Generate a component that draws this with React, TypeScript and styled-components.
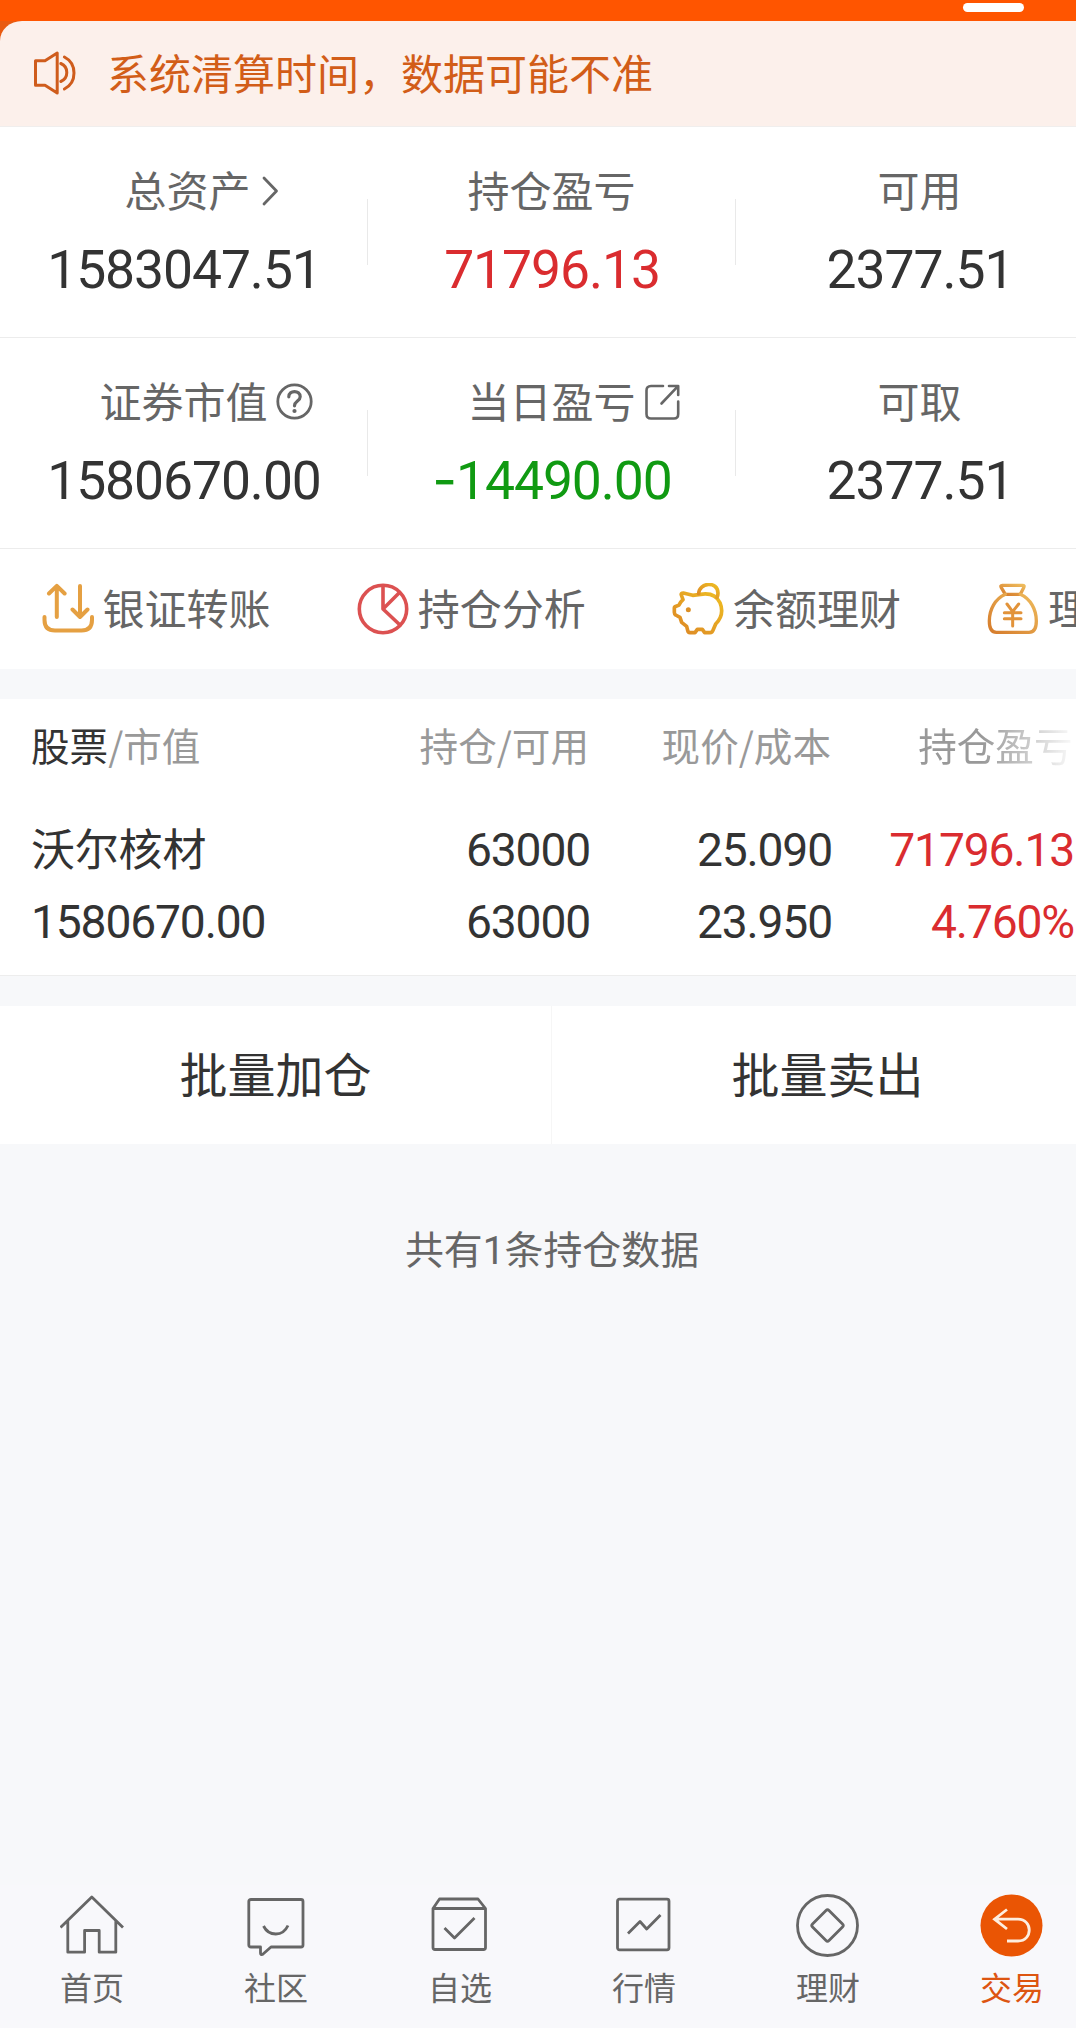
import React from 'react';
import styled, { createGlobalStyle } from 'styled-components';

const CJK = "'Noto Sans CJK SC', 'Noto Sans', sans-serif";
const NUM = "Roboto, 'Noto Sans CJK SC', sans-serif";

const GlobalStyle = createGlobalStyle`
  * { box-sizing: border-box; }
  html { background: #f7f8fa; }
  body { margin: 0; overflow: hidden; font-family: ${CJK}; }
`;

/* The page is wider than the viewport; its right edge is cut off. */
const Viewport = styled.div`
  width: 1076px;
  height: 2028px;
  overflow: hidden;
`;

const Page = styled.div`
  width: 1104px;
  height: 2028px;
  display: flex;
  flex-direction: column;
  background: #f7f8fa;
`;

const TopBar = styled.header`
  height: 21px;
  flex: none;
  padding: 3px 0 0 963px;
  background: #ff5500;
`;

const Pill = styled.div`
  width: 61px;
  height: 9px;
  border-radius: 4.5px;
  background: #fff;
`;

const NoticeWrap = styled.div`
  flex: none;
  background: linear-gradient(#e95a10 0 30px, #fff 30px);
`;

const Notice = styled.div`
  height: 106px;
  display: flex;
  align-items: center;
  padding: 0 0 2px 32px;
  border-radius: 22px 0 0 0 / 20px 0 0 0;
  background: #fcf0eb;
  border-bottom: 1px solid #f0eeed;
`;

const NoticeText = styled.span`
  margin: -2px 0 0 29px;
  font-size: 42px;
  line-height: 60px;
  color: #d25d18;
`;

const Panel = styled.section`
  flex: none;
  background: #fff;
`;

const StatRow = styled.div`
  height: 211px;
  display: grid;
  grid-template-columns: repeat(3, 368px);
  border-bottom: 1px solid #ececec;
`;

const StatCell = styled.div<{ $divided?: boolean }>`
  display: flex;
  flex-direction: column;
  align-items: center;
  padding-top: 41px;
  background: ${(p) =>
    p.$divided ? 'linear-gradient(#e9e9e9, #e9e9e9) 100% 72px / 1px 66px no-repeat' : 'none'};
`;

const StatLabel = styled.div<{ $shift?: number }>`
  display: flex;
  align-items: center;
  height: 42px;
  padding-left: ${(p) => p.$shift ?? 0}px;
  margin-left: -1px;
  font-size: 42px;
  line-height: 42px;
  color: #666;
  white-space: nowrap;

  svg {
    flex: none;
  }
`;

const HangingIcon = styled.span<{ $w: number }>`
  display: flex;
  width: ${(p) => p.$w}px;
  margin-right: -${(p) => p.$w}px;
  justify-content: flex-end;
  padding-top: 3px;
`;

type Tone = 'plain' | 'up' | 'down';
const tones: Record<Tone, string> = { plain: '#333', up: '#da2c2f', down: '#109a12' };

const StatValue = styled.div<{ $tone: Tone }>`
  margin-top: 34px;
  font-family: ${NUM};
  font-size: 53.4px;
  line-height: 52px;
  letter-spacing: -1.05px;
  color: ${(p) => tones[p.$tone]};
`;

const Minus = styled.span`
  font-family: Inter, sans-serif;
  font-size: 54px;
  line-height: 0;
`;

const Actions = styled.div`
  height: 120px;
  display: flex;
  overflow: hidden;
`;

const Action = styled.div`
  flex: none;
  width: 315.2px;
  display: flex;
  align-items: center;
  padding-left: 41.5px;
  font-size: 42px;
  line-height: 48px;
  color: #666;
  white-space: nowrap;

  svg {
    flex: none;
    margin-right: 9px;
  }
`;

const ActionText = styled.span`
  padding-bottom: 4px;
`;

const Gap = styled.div<{ $h: number; $line?: boolean }>`
  flex: none;
  height: ${(p) => p.$h}px;
  border-top: ${(p) => (p.$line ? '1px solid #ededed' : '0')};
`;

const Holdings = styled(Panel)`
  height: 276px;
  padding-left: 31px;
`;

const HoldRow = styled.div`
  display: grid;
  grid-template-columns: 259px 300px 242px 242px;
  text-align: right;
  white-space: nowrap;

  > :first-child {
    text-align: left;
  }
`;

const HoldHead = styled(HoldRow)`
  padding-top: 19px;
  height: 115px;
  font-size: 38.6px;
  line-height: 52px;
  color: #999;
`;

const Strong = styled.span`
  color: #333;
`;

const HeadCell = styled.span<{ $fade?: boolean }>`
  margin-right: ${(p) => (p.$fade ? 1.5 : 1)}px;
  mask-image: ${(p) => (p.$fade ? 'linear-gradient(to right, #000 62%, transparent 102%)' : 'none')};
`;

const HoldLine = styled(HoldRow)`
  height: 72px;
  line-height: 72px;
  font-family: ${NUM};
  font-size: 46.2px;
  letter-spacing: -1.15px;
  color: #333;
`;

const StockName = styled.span`
  margin-top: -3px;
  font-family: ${CJK};
  font-size: 44px;
  letter-spacing: -0.2px;
`;

const Num = styled.span<{ $tone?: Tone }>`
  color: ${(p) => tones[p.$tone ?? 'plain']};
`;

const BatchBar = styled(Panel)`
  height: 138px;
  display: grid;
  grid-template-columns: 1fr 1fr;
`;

const BatchButton = styled.button`
  border: 0;
  border-right: 1px solid #f6f6f6;
  padding: 0 0 6px;
  background: #fff;
  font-family: ${CJK};
  font-size: 48px;
  line-height: 60px;
  color: #333;
`;

const Summary = styled.p`
  flex: 1;
  margin: 0;
  padding-top: 77px;
  font-size: 38.9px;
  line-height: 52px;
  text-align: center;
  color: #666;
`;

const Count = styled.span`
  font-family: ${NUM};
`;

const TabBar = styled.nav`
  flex: none;
  height: 143px;
  display: grid;
  grid-template-columns: repeat(6, 184px);
  background: #f8f8fb;
`;

const Tab = styled.div<{ $active?: boolean }>`
  display: flex;
  flex-direction: column;
  align-items: center;
  padding-top: 8px;
  font-size: 32px;
  line-height: 40px;
  color: ${(p) => (p.$active ? '#dd5511' : '#666')};

  svg {
    margin-bottom: 9px;
  }
`;

const SpeakerIcon = () => (
  <svg width="46" height="46" viewBox="32 50 46 46" fill="none" stroke="#cf5c1c" strokeWidth="3" strokeLinejoin="round" strokeLinecap="round">
    <path d="M35.5 60.7H45L57.2 53V93L45 85.3H35.5Z" />
    <path d="M60.8 63.5Q66.8 66 66.8 72.5T60.8 81.5M64.4 57Q74 62 74 73T64.4 89" />
  </svg>
);

const ChevronIcon = () => (
  <svg width="17" height="30" viewBox="0 0 17 30" fill="none" stroke="#666" strokeWidth="2.8" strokeLinecap="round" strokeLinejoin="round">
    <path d="M2 2L14.5 15L2 28" />
  </svg>
);

const HelpIcon = () => (
  <svg width="37" height="37" viewBox="0 0 37 37" fill="none" stroke="#666" strokeWidth="2.8" strokeLinecap="round">
    <circle cx="18.5" cy="18.5" r="16.7" />
    <path d="M12.8 13.8C12.8 6.8 24.2 6.8 24.2 13.8C24.2 18 18.5 18.2 18.5 22.8" strokeWidth="3.2" />
    <circle cx="18.5" cy="28" r="2.1" fill="#666" stroke="none" />
  </svg>
);

const ShareIcon = () => (
  <svg width="35" height="36" viewBox="0 0 35 36" fill="none" stroke="#666" strokeWidth="2.6" strokeLinecap="round" strokeLinejoin="round">
    <path d="M18 2H6Q1.5 2 1.5 6.5V30Q1.5 34.5 6 34.5H29Q33.2 34.5 33.2 30V17.5" />
    <path d="M24 2H33.2V11M33 2.2L16.5 19.5" />
  </svg>
);

const TransferIcon = () => (
  <svg width="52" height="52" viewBox="0 0 52 52" fill="none" stroke="#e5a042" strokeWidth="4" strokeLinecap="round" strokeLinejoin="round">
    <path d="M14.8 34V3M7 10.5L14.8 2.8L22.6 10.5M38 3V34M30.5 26.5L38 34L45.5 26.5" />
    <path d="M2.5 34V37Q2.5 47.5 13 47.5H39.5Q50 47.5 50 37V34" />
  </svg>
);

const PieIcon = () => (
  <svg width="52" height="52" viewBox="0 0 52 52" fill="none" stroke="#dc5151" strokeWidth="3.6" strokeLinecap="round" strokeLinejoin="round">
    <circle cx="26" cy="26" r="23.7" />
    <path d="M26 3V26L42.5 9.5M26 26L43 42" />
  </svg>
);

const PigIcon = () => (
  <svg width="52" height="52" viewBox="36 38 156 156" fill="none" stroke="url(#pig)" strokeWidth="11" strokeLinecap="round" strokeLinejoin="round">
    <defs>
      <linearGradient id="pig" x1="1" y1="0" x2="0" y2="1">
        <stop offset="0" stopColor="#eebd22" />
        <stop offset="1" stopColor="#dc8626" />
      </linearGradient>
    </defs>
    <path d="M64 74Q62 68 70 68L98 75L122 72C148 68 170 76 180 97C190 122 184 144 167 161L159 180Q157 187 150 187H134L127 177H112L105 187H90Q84 187 83 180L80 168L65 156L60 141L47 134Q43 132 43 126V113Q43 109 48 108L57 104Q60 96 69 88Z" />
    <path d="M116 70C117 36 173 31 174 68Q174 76 171 81" />
    <circle cx="85" cy="118" r="7.5" fill="#dc9026" stroke="none" />
  </svg>
);

const BagIcon = () => (
  <svg width="52" height="52" viewBox="34 36 156 156" fill="none" stroke="url(#bag)" strokeWidth="10" strokeLinecap="round" strokeLinejoin="round">
    <defs>
      <linearGradient id="bag" x1="1" y1="0" x2="0" y2="1">
        <stop offset="0" stopColor="#eebb5c" />
        <stop offset="1" stopColor="#d67c2c" />
      </linearGradient>
    </defs>
    <path d="M80 43H140Q148 43 144 50L134 70H89L77 50Q73 43 80 43Z" />
    <path d="M89 70C58 84 41 116 41 150Q41 184 62 184H160Q182 184 182 150C182 116 165 84 134 70" />
    <g stroke="#e2933a" strokeWidth="9">
      <path d="M94 99L111 122L129 99M86 125H136M86 143H136M111 124V165" />
    </g>
  </svg>
);

const TabSvg = ({ children }: { children: React.ReactNode }) => (
  <svg width="64" height="64" viewBox="0 0 64 64" fill="none" stroke="#666" strokeWidth="2.8" strokeLinejoin="round">
    {children}
  </svg>
);

const HomeIcon = () => (
  <TabSvg>
    <path d="M0.5 34.5L31.8 4L63 34.5M7.8 28V59.2H24.6V37.5H39.2V59.2H55.8V28" />
  </TabSvg>
);

const ChatIcon = () => (
  <TabSvg>
    <path d="M7 6.5H57Q59 6.5 59 8.5V52Q59 54 57 54H27L18.5 61.5Q16.5 62 16.5 60V54H7Q4.8 54 4.8 52V8.5Q4.8 6.5 7 6.5Z" />
    <path d="M19.5 33Q23.5 41 31.8 41T44 32.5" />
  </TabSvg>
);

const BoxIcon = () => (
  <TabSvg>
    <path d="M5 15.5L11.5 6H50L57.5 15.5V54.5Q57.5 56.5 55.5 56.5H7Q5 56.5 5 54.5ZM5 15.5H57.5M16.5 35L26.5 45L46.5 25" />
  </TabSvg>
);

const ChartIcon = () => (
  <TabSvg>
    <rect x="5.5" y="6.2" width="51.5" height="50.6" rx="2" />
    <path d="M16 40.5L28 28.5L34.7 36L48.5 22" />
  </TabSvg>
);

const WealthIcon = () => (
  <TabSvg>
    <circle cx="31.5" cy="32.5" r="30" />
    <path d="M30 17.5Q31.5 16 33 17.5L46.5 31Q48 32.5 46.5 34L33 47.5Q31.5 49 30 47.5L16.5 34Q15 32.5 16.5 31Z" />
  </TabSvg>
);

const TradeIcon = () => (
  <svg width="64" height="64" viewBox="0 0 64 64" fill="none" stroke="#fdeee0" strokeWidth="2.8">
    <circle cx="31.5" cy="32.5" r="31" fill="#ea5504" stroke="none" />
    <path d="M27 16.5L14.5 26.2L27 36M14.5 26.2H38C53 26.2 53 48 38 48H27" />
  </svg>
);

const actions = [
  { icon: <TransferIcon />, text: '银证转账' },
  { icon: <PieIcon />, text: '持仓分析' },
  { icon: <PigIcon />, text: '余额理财' },
  { icon: <BagIcon />, text: '理财' },
];

const tabs = [
  { icon: <HomeIcon />, text: '首页' },
  { icon: <ChatIcon />, text: '社区' },
  { icon: <BoxIcon />, text: '自选' },
  { icon: <ChartIcon />, text: '行情' },
  { icon: <WealthIcon />, text: '理财' },
  { icon: <TradeIcon />, text: '交易', active: true },
];

interface StatProps {
  label: string;
  value: string;
  tone?: Tone;
  icon?: React.ReactNode;
  iconWidth?: number;
  shift?: number;
  divided?: boolean;
}

const Stat = ({ label, value, tone = 'plain', icon, iconWidth = 0, shift, divided }: StatProps) => (
  <StatCell $divided={divided}>
    <StatLabel $shift={shift}>
      {label}
      {icon && <HangingIcon $w={iconWidth}>{icon}</HangingIcon>}
    </StatLabel>
    <StatValue $tone={tone}>
      {value.startsWith('-') && <Minus>-</Minus>}
      {value.replace('-', '')}
    </StatValue>
  </StatCell>
);

export default function App() {
  return (
    <Viewport>
      <GlobalStyle />
      <Page>
        <TopBar>
          <Pill />
        </TopBar>
        <NoticeWrap>
          <Notice>
            <SpeakerIcon />
            <NoticeText>系统清算时间，数据可能不准</NoticeText>
          </Notice>
        </NoticeWrap>

        <Panel>
          <StatRow>
            <Stat label="总资产" value="1583047.51" icon={<ChevronIcon />} iconWidth={28} shift={8} divided />
            <Stat label="持仓盈亏" value="71796.13" tone="up" divided />
            <Stat label="可用" value="2377.51" />
          </StatRow>
          <StatRow>
            <Stat label="证券市值" value="1580670.00" icon={<HelpIcon />} iconWidth={45} divided />
            <Stat label="当日盈亏" value="-14490.00" tone="down" icon={<ShareIcon />} iconWidth={44} divided />
            <Stat label="可取" value="2377.51" />
          </StatRow>
          <Actions>
            {actions.map((a) => (
              <Action key={a.text}>
                {a.icon}
                <ActionText>{a.text}</ActionText>
              </Action>
            ))}
          </Actions>
        </Panel>

        <Gap $h={30} />

        <Holdings>
          <HoldHead>
            <HeadCell>
              <Strong>股票</Strong>/市值
            </HeadCell>
            <HeadCell>持仓/可用</HeadCell>
            <HeadCell>现价/成本</HeadCell>
            <HeadCell $fade>持仓盈亏</HeadCell>
          </HoldHead>
          <HoldLine>
            <StockName>沃尔核材</StockName>
            <Num>63000</Num>
            <Num>25.090</Num>
            <Num $tone="up">71796.13</Num>
          </HoldLine>
          <HoldLine>
            <Num>1580670.00</Num>
            <Num>63000</Num>
            <Num>23.950</Num>
            <Num $tone="up">4.760%</Num>
          </HoldLine>
        </Holdings>

        <Gap $h={31} $line />

        <BatchBar>
          <BatchButton>批量加仓</BatchButton>
          <BatchButton>批量卖出</BatchButton>
        </BatchBar>

        <Summary>
          共有<Count>1</Count>条持仓数据
        </Summary>

        <TabBar>
          {tabs.map((t) => (
            <Tab key={t.text} $active={t.active}>
              {t.icon}
              {t.text}
            </Tab>
          ))}
        </TabBar>
      </Page>
    </Viewport>
  );
}
